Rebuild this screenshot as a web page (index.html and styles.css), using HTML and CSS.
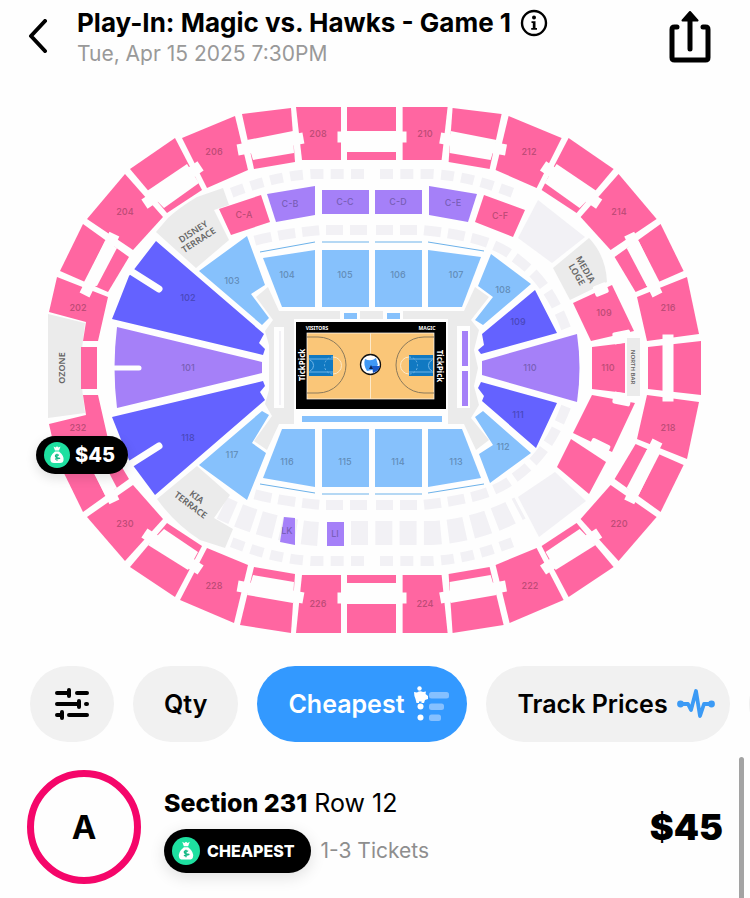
FILE: index.html
```html
<!DOCTYPE html>
<html lang="en">
<head>
  <meta charset="UTF-8">
  <meta name="viewport" content="width=device-width, initial-scale=1">
  <title>Play-In: Magic vs. Hawks - Game 1</title>
  <link rel="stylesheet" href="styles.css">
</head>
<body>
  <header class="header">
    <button class="icon-btn back" aria-label="Back">
      <svg width="20" height="34" viewBox="0 0 20 34"><path d="M17 2 L3 17 L17 32" fill="none" stroke="#000" stroke-width="4" stroke-linecap="round" stroke-linejoin="round"/></svg>
    </button>
    <div class="event">
      <div class="title-row">
        <h1>Play-In: Magic vs. Hawks - Game 1</h1>
        <button class="icon-btn" aria-label="Event info">
          <svg width="28" height="28" viewBox="0 0 28 28"><circle cx="14" cy="14" r="12" fill="none" stroke="#000" stroke-width="2.4"/><circle cx="14" cy="8.6" r="2" /><path d="M11.500 12.200h4v6.800h1.500v1.800h-5.800v-1.800h1.600v-5h-1.300z"/></svg>
        </button>
      </div>
      <p class="date">Tue, Apr 15 2025 7:30PM</p>
    </div>
    <button class="icon-btn share" aria-label="Share">
      <svg width="42" height="52" viewBox="0 0 42 52"><path d="M8 16H5.500Q3 16 3 18.500V46.500Q3 49 5.500 49H36.500Q39 49 39 46.500V18.500Q39 16 36.500 16H34" fill="none" stroke="#000" stroke-width="5" stroke-linecap="round"/><path d="M21 8V38" stroke="#000" stroke-width="5" stroke-linecap="round"/><path d="M21 1L28.500 9.500H13.500Z" stroke="#000" stroke-width="2" stroke-linejoin="round"/></svg>
    </button>
  </header>

  <main>
    <section class="map">
      <svg class="arena" viewBox="0 90 750 560" role="img" aria-label="Seating map">
        <defs>
          <g id="ring-side">
            <g class="pink">
              <path d="M60 271L83 224L129 257L108 292Z"/>
              <path d="M87 219L125 174L163 217L133 250Z"/>
              <path d="M130 169L175 138L202 190L167 213Z"/>
              <path d="M182 138L235 116L248 170L207 188Z"/>
              <path d="M242 114L291 108L295 162L254 169Z"/>
              <path d="M296 107H341V160H302Z"/>
              <path d="M60 465L83 512L129 479L108 444Z"/>
              <path d="M87 517L125 561L163 519L133 485Z"/>
              <path d="M130 567L175 597L202 546L167 523Z"/>
              <path d="M180 600L234 623L248 565L207 548Z"/>
              <path d="M240 625L291 633L295 574L254 567Z"/>
              <path d="M296 633H341V575H302Z"/>
            </g>
            <g class="gap">
              <path d="M105 241L83 284L97 286L117 248Z"/>
              <path d="M147 191L187 164L199 183L164 208Z"/>
              <path d="M247 140L293 131L294 153L253 160Z"/>
              <path d="M105 495L83 452L97 450L117 488Z"/>
              <path d="M148 545L188 570L198 552L164 529Z"/>
              <path d="M247 595L293 603L294 582L253 575Z"/>
            </g>
            <g class="cap">
              <path d="M112 239L88 289"/>
              <path d="M149 201L196 169"/>
              <path d="M243 149L298 139"/>
              <path d="M112 497L88 447"/>
              <path d="M149 536L196 567"/>
              <path d="M243 587L298 597"/>
            </g>
          </g>
          <g id="suites">
            <path d="M364 174H311C280 176 255 184 231 193" stroke-dasharray="13 7.300"/>
            <path d="M380 174H433C464 176 489 184 513 193" stroke-dasharray="13 7.300"/>
            <path d="M367 230H322C300 232 270 236 250 242" stroke-dasharray="17 7"/>
            <path d="M376 230H422C460 234 490 240 510 254S550 285 567 331" stroke-dasharray="17 7"/>
          </g>
        </defs>

        <!-- suites and clubs without tickets -->
        <g class="suite">
          <use href="#suites"/>
          <use href="#suites" transform="matrix(1 0 0 -1 0 735)"/>
          <path class="loge" d="M351 533H430C460 532 490 524 520 508" stroke-dasharray="17 7.300"/>
          <path class="loge" d="M318 534C290 532 255 524 222 508" stroke-dasharray="16 6"/>
        </g>
        <path class="pale" d="M538 200L585 237L552 263L518 238Z"/>
        <path class="pale edged" d="M555 472L586 501L539 537L518 497Z"/>
        <g class="grey">
          <path d="M156 232L168 218Q180 207 197 197L223 188L229 205L214 210L229 240L196 268Z"/>
          <path d="M197 466L230 495L214 518L233 529L225 548L200 540Q175 524 157 499Z"/>
          <path d="M589 238Q606 256 607 282L570 300L553 268Z"/>
          <path d="M48 314L85 323Q78 368 85 413L48 418Z"/>
          <path d="M256 297L268 287L279 311H464L475 287L489 297L471 320L479 330L474 350L478 368L474 386L479 405L471 418L489 440L476 450L464 424H279L267 450L254 441L272 416L265 404L269 390V345L265 331L273 320Z"/>
        </g>

        <!-- 200 level -->
        <use href="#ring-side"/>
        <use href="#ring-side" transform="matrix(-1 0 0 1 743.600 0)"/>
        <g class="pink">
          <path d="M347 107H396V131H347ZM347 152H396V160H347ZM347 575H396V583H347ZM347 604H396V633H347Z"/>
          <path d="M57 277L108 297L98 341H83L86 322L49 312Z"/>
          <path d="M57 459L108 439L98 395H83L86 415L49 424Z"/>
          <path d="M81 347H97V389H81Z"/>
          <path d="M687 277L637 297L647 341L699 334Z"/>
          <path d="M648 347L701 341V395L648 389Z"/>
          <path d="M687 459L637 439L647 395L699 402Z"/>
        </g>
        <g class="cap">
          <path d="M343 137H401M343 598H401"/>
          <path d="M89 286L87 290M89 450L87 446M655 290L653 286M655 446L653 450"/>
          <path d="M668 340V396"/>
        </g>

        <!-- east mezzanine -->
        <g class="pink">
          <path d="M573 303L612 285L634 331L591 341Z"/>
          <path d="M592 347L625 343V393L592 389Z"/>
          <path d="M592 395L635 403L612 452L573 433Z"/>
          <path d="M571 439L606 462L589 494L557 467Z"/>
        </g>
        <g class="gap">
          <rect x="594" y="284" width="14" height="11" rx="2" transform="rotate(-22 601 290)"/>
          <rect x="613" y="331" width="18" height="12" rx="2" transform="rotate(-12 622 337)"/>
          <rect x="613" y="393" width="18" height="12" rx="2" transform="rotate(12 622 399)"/>
          <rect x="589" y="441" width="20" height="13" rx="2" transform="rotate(26 599 448)"/>
        </g>
        <rect class="bar" x="627" y="338" width="13" height="58"/>

        <!-- club row -->
        <path class="pink" d="M219 209L261 195L270 222L231 235ZM484 195L525 210L513 237L475 222Z"/>
        <g class="purple">
          <path d="M267 194L315 186V215L276 222Z"/>
          <path d="M322 190H369V214H322ZM375 190H422V214H375Z"/>
          <path d="M429 186L477 194L468 222L429 215Z"/>
          <path d="M284 517L295 518V545L280 542Z"/>
          <path d="M327 522H344V546H327Z"/>
          <path d="M117 327L262 362V373L117 408Q112 368 117 327Z"/>
          <path d="M577 334Q582 368 577 402L482 375V361Z"/>
        </g>

        <!-- 100 level -->
        <g class="indigo">
          <path d="M156 241L264 334L259 343L265 349L263 355L112 319L118 304L129 276Z"/>
          <path d="M112 417L263 381L265 386L260 392L265 400L155 495L129 460L118 432Z"/>
          <path d="M535 290L557 333L481 354L478 350L484 345L482 334Z"/>
          <path d="M481 382L557 403L536 448L482 401L484 396L478 388Z"/>
        </g>
        <path class="aisle" d="M129 270L159 289M129 465L159 446"/>
        <path class="aisle thin" d="M112 368H139"/>
        <g class="sky">
          <path d="M247 236L265 285L251 294L269 318L262 325L199 271Z"/>
          <path d="M263 258L315 250V307H282Z"/>
          <path d="M322 250H369V307H322ZM375 250H422V307H375Z"/>
          <path d="M428 250L481 257L462 307H428Z"/>
          <path d="M491 254L531 284L483 325L475 320L493 297L478 286Z"/>
          <path d="M262 411L269 415L252 443L266 453L247 500L199 465Z"/>
          <path d="M282 429H315V487L263 478Z"/>
          <path d="M322 429H369V487H322ZM375 429H422V487H375Z"/>
          <path d="M428 429H462L481 478L428 487Z"/>
          <path d="M483 411L531 453L490 483L479 454L493 445L475 417Z"/>
        </g>
        <path class="rail" d="M260 252L315 242M322 242H369M375 242H422M428 242L484 251M260 484L315 493M322 494H369M375 494H422M428 493L484 484"/>

        <!-- courtside -->
        <g class="gap">
          <path d="M294 319H448V428H294ZM274 327H284V408H274ZM457 326H470V408H457ZM340 311H360V322H340ZM383 311H403V322H383Z"/>
        </g>
        <path class="pale" d="M279 331H281V405H279Z"/>
        <path class="sky" d="M302 416H442V422H302ZM344 313H357V319H344ZM387 313H400V319H387Z"/>
        <path class="purple" d="M462 331H468V366H462ZM462 371H468V406H462Z"/>

        <rect x="296" y="322" width="150" height="87"/>
        <rect x="307" y="333" width="127" height="66" fill="#fac678" stroke="#fff" stroke-width=".7"/>
        <g class="court-line">
          <path d="M307 337H318A28 28 0 0 1 318 393H307M434 337H424A28 28 0 0 0 424 393H434"/>
          <path class="white" d="M370.500 333V399M333 357A8.500 8.500 0 0 1 333 374M409 357A8.500 8.500 0 0 0 409 374"/>
        </g>
        <path d="M309 355H333V376H309ZM409 355H433V376H409Z" fill="#1179c2"/>
        <g class="court-line">
          <path class="key" d="M309 359H333M309 372H333M409 359H433M409 372H433"/>
          <path class="key" d="M310 360A6 6 0 0 1 310 371M432 360A6 6 0 0 0 432 371"/>
          <path class="key dash" d="M333 357A8.500 8.500 0 0 0 333 374M409 357A8.500 8.500 0 0 1 409 374"/>
        </g>
        <circle cx="370.500" cy="364.500" r="10" fill="#fff" stroke="#111" stroke-width="1.300"/>
        <path d="M365 359Q371 362 376 358L378 365L372 370L367 371Q363 365 365 359Z" fill="#3f98f5"/>
        <path d="M372 366L380 366Q379 371 373 373Z" fill="#1657c8"/>
        <path d="M369 369L371 365L373 369Z" fill="#12204c"/>

        <g class="num">
          <text x="78" y="311">202</text><text x="125" y="215">204</text><text x="214" y="155">206</text>
          <text x="318" y="137">208</text><text x="425" y="137">210</text><text x="529" y="155">212</text>
          <text x="619" y="215">214</text><text x="668" y="311">216</text><text x="668" y="431">218</text>
          <text x="619" y="527">220</text><text x="530" y="589">222</text><text x="425" y="607">224</text>
          <text x="318" y="607">226</text><text x="214" y="589">228</text><text x="125" y="527">230</text>
          <text x="78" y="431">232</text><text x="604" y="316">109</text><text x="608" y="371">110</text>
          <text x="244" y="218">C-A</text><text x="290" y="207">C-B</text><text x="345" y="205">C-C</text>
          <text x="398" y="205">C-D</text><text x="453" y="206">C-E</text><text x="500" y="219">C-F</text>
          <text x="287" y="534">LK</text><text x="335" y="537">LI</text>
          <text x="188" y="301">102</text><text x="188" y="371">101</text><text x="188" y="441">118</text>
          <text x="232" y="284">103</text><text x="287" y="278">104</text><text x="345" y="278">105</text>
          <text x="398" y="278">106</text><text x="456" y="278">107</text><text x="503" y="293">108</text>
          <text x="518" y="325">109</text><text x="530" y="371">110</text><text x="518" y="418">111</text>
          <text x="503" y="450">112</text><text x="456" y="465">113</text><text x="398" y="465">114</text>
          <text x="345" y="465">115</text><text x="287" y="465">116</text><text x="232" y="458">117</text>
        </g>
        <g class="place">
          <g transform="translate(196 236) rotate(-33)"><text y="-2">DISNEY</text><text y="8">TERRACE</text></g>
          <g transform="translate(193 502) rotate(37)"><text y="-3">KIA</text><text y="7">TERRACE</text></g>
          <g transform="translate(581 272) rotate(60)"><text y="-2">MEDIA</text><text y="8">LOGE</text></g>
          <text transform="translate(65 368) rotate(-90)">OZONE</text>
          <text class="tiny" transform="translate(631 367) rotate(90)">NORTH BAR</text>
        </g>
        <g class="court-text">
          <text class="brand" transform="translate(305 365) rotate(-90)">TickPick</text>
          <text class="brand" transform="translate(437 366) rotate(90)">TickPick</text>
          <text x="317" y="330">VISITORS</text>
          <text x="427" y="330">MAGIC</text>
        </g>
      </svg>
      <button class="pin">
        <svg class="bag" viewBox="0 0 26 26"><circle cx="13" cy="13" r="13" fill="#1ee0a0"/><path d="M9.500 4.500L11.500 5.500L13 4.300L14.500 5.500L16.500 4.500L15 8.500H11ZM11 9.500H15Q20.500 14 19.500 18.500Q19 21 16 21H10Q7 21 6.500 18.500Q5.500 14 11 9.500Z" fill="#fff"/><path d="M15 13.200Q11.300 12.200 11.400 14T14.700 16T11 17.200M13 11.800V18.800" fill="none" stroke="#12b884" stroke-width="1.200"/></svg>
        $45
      </button>
    </section>

    <nav class="filters">
      <button class="chip chip-icon" aria-label="Filters">
        <svg width="34" height="34" viewBox="0 0 34 34" fill="none" stroke="#000" stroke-width="4" stroke-linecap="round"><path d="M2 6H14M22 6H32M2 17H22M31 17H32M2 28H5M14 28H32"/><path d="M14 3V9M24 14V20M7 25V31"/></svg>
      </button>
      <button class="chip">Qty</button>
      <button class="chip active">Cheapest
        <svg width="36" height="36" viewBox="0 0 36 36"><g fill="#fff"><circle cx="6.500" cy="2.500" r="2.200"/><path d="M1 6L4 6.500Q7 4.500 10 6L13 5.500L12.500 8L15 10V13L12 14L11 17H8.500V15.500H6V17H3.500L2.500 13Q1 10 1 6Z"/><circle cx="7.500" cy="20.500" r="3"/><circle cx="7.500" cy="31.500" r="3"/></g><g fill="#86c0ff"><rect x="16" y="6" width="20" height="6.500" rx="2.500"/><rect x="16" y="17.500" width="15" height="6.500" rx="2.500"/><rect x="16" y="28.500" width="12" height="6.500" rx="2.500"/></g></svg>
      </button>
      <button class="chip track">Track Prices
        <svg width="38" height="32" viewBox="0 0 38 32"><path d="M4 16H11L14 22L19 3L23 28L27 16H34" fill="none" stroke="#3b9af5" stroke-width="3.800" stroke-linejoin="round"/><g fill="#3b9af5"><circle cx="3.500" cy="16" r="3.400"/><circle cx="34.500" cy="16" r="3.400"/></g></svg>
      </button>
      <button class="chip chip-icon" aria-label="More filters"></button>
    </nav>

    <section class="results">
      <a class="listing" href="#">
        <span class="grade">A</span>
        <span class="details">
          <span class="seat"><b>Section 231</b> Row 12</span>
          <span class="meta">
            <span class="badge"><svg class="bag" viewBox="0 0 26 26"><circle cx="13" cy="13" r="13" fill="#1ee0a0"/><path d="M9.500 4.500L11.500 5.500L13 4.300L14.500 5.500L16.500 4.500L15 8.500H11ZM11 9.500H15Q20.500 14 19.500 18.500Q19 21 16 21H10Q7 21 6.500 18.500Q5.500 14 11 9.500Z" fill="#fff"/><path d="M15 13.200Q11.300 12.200 11.400 14T14.700 16T11 17.200M13 11.800V18.800" fill="none" stroke="#12b884" stroke-width="1.200"/></svg>CHEAPEST</span>
            <span class="tickets">1-3 Tickets</span>
          </span>
        </span>
        <span class="price">$45</span>
      </a>
      <div class="scroll-thumb"></div>
    </section>
  </main>
</body>
</html>
```
FILE: styles.css
```css
* { box-sizing: border-box; }
body {
  margin: 0;
  min-height: 100vh;
  display: flex;
  flex-direction: column;
  background: #fefefe;
  color: #000;
  font-family: Inter, "Liberation Sans", sans-serif;
  overflow-x: hidden;
}
button {
  font: inherit;
  color: inherit;
  border: 0;
  padding: 0;
  cursor: pointer;
}
svg { display: block; flex: none; }
main {
  flex: 1;
  display: flex;
  flex-direction: column;
}

/* header */
.header {
  display: flex;
  align-items: flex-start;
  height: 90px;
  padding: 8px 39px 0 28px;
}
.icon-btn { background: none; }
.back { margin: 11px 29px 0 0; }
.share { margin-top: 3px; }
.event { flex: 1; }
.title-row {
  display: flex;
  align-items: center;
  gap: 9px;
}
h1 {
  margin: 0;
  font-size: 26px;
  line-height: 30px;
  font-weight: 700;
  white-space: nowrap;
}
.date {
  margin: 4px 0 0;
  font-size: 21px;
  line-height: 24px;
  color: #999;
}

/* seating map */
.map { position: relative; }
.arena { width: 100%; height: auto; }
.pink { fill: #ff66a1; }
.purple { fill: #a580f8; }
.indigo { fill: #6462ff; }
.sky { fill: #86c1fc; }
.grey, .bar { fill: #ebebeb; }
.pale { fill: #f2f1f5; }
.pale.edged {
  stroke: #fefefe;
  stroke-width: 6;
  paint-order: stroke;
}
.gap { fill: #fefefe; }
.cap {
  fill: none;
  stroke: #fefefe;
  stroke-width: 11;
  stroke-linecap: square;
}
.suite {
  fill: none;
  stroke: #f2f1f5;
  stroke-width: 10;
}
.suite .loge { stroke-width: 24; }
.aisle {
  stroke: #fefefe;
  stroke-width: 7;
  stroke-linecap: round;
}
.aisle.thin { stroke-width: 5; }
.rail {
  fill: none;
  stroke: #6db2ea;
  stroke-width: 1;
}
.court-line {
  fill: none;
  stroke: #8b7a5c;
  stroke-width: 1;
}
.court-line .white { stroke: #fde9c8; }
.court-line .key { stroke: #6fb4e6; }
.court-line .dash { stroke-dasharray: 2 2; }
.num {
  font-size: 9px;
  font-weight: 600;
  fill: #000;
  fill-opacity: .27;
  text-anchor: middle;
}
.place {
  font-family: "Noto Sans", sans-serif;
  font-size: 9px;
  font-weight: 600;
  fill: #666;
  text-anchor: middle;
}
.place .tiny { font-size: 6px; }
.court-text {
  font-family: "Noto Sans", sans-serif;
  font-size: 5px;
  font-weight: 700;
  fill: #fff;
  text-anchor: middle;
}
.court-text .brand { font-size: 8px; }

.pin, .badge {
  display: flex;
  align-items: center;
  background: #000;
  color: #fff;
  font-weight: 800;
}
.pin {
  position: absolute;
  left: 4.8%;
  top: 61.8%;
  height: 38px;
  padding: 0 13px 0 8px;
  gap: 5px;
  border-radius: 19px;
  font-size: 20px;
  box-shadow: 0 4px 12px rgba(0, 0, 0, .12);
}
.bag { width: 26px; height: 26px; }

/* filter chips */
.filters {
  display: flex;
  gap: 19px;
  padding: 16px 0 15px 30px;
  overflow: hidden;
}
.chip {
  flex: none;
  display: flex;
  align-items: center;
  gap: 9px;
  height: 76px;
  padding: 0 31px;
  border-radius: 38px;
  background: #f1f1f1;
  font-size: 25px;
  font-weight: 600;
}
.chip-icon {
  width: 84px;
  padding: 0 25px;
}
.chip.active {
  background: #3399ff;
  color: #fff;
  padding-right: 18px;
}
.chip.track { padding-right: 15px; }

/* listings */
.results {
  flex: 1;
  display: flex;
  align-items: stretch;
}
.listing {
  flex: 1;
  display: flex;
  align-items: center;
  align-self: flex-start;
  padding: 13px 16px 13px 27px;
  color: #000;
  text-decoration: none;
}
.grade {
  display: flex;
  align-items: center;
  justify-content: center;
  width: 114px;
  height: 114px;
  border: 7px solid #f5066a;
  border-radius: 50%;
  font-size: 33px;
  font-weight: 700;
}
.details {
  flex: 1;
  margin-left: 23px;
  padding-top: 6px;
}
.seat {
  display: block;
  font-size: 25px;
  line-height: 30px;
}
.seat b { font-weight: 800; }
.meta {
  display: flex;
  align-items: center;
  gap: 10px;
  margin-top: 11px;
}
.badge {
  height: 44px;
  padding: 0 16px 0 8px;
  gap: 7px;
  border-radius: 22px;
  font-size: 16px;
  box-shadow: 0 4px 16px rgba(0, 0, 0, .12);
}
.badge .bag { width: 28px; height: 28px; }
.tickets {
  font-size: 21px;
  color: #8e8e8e;
}
.price {
  font-size: 36px;
  font-weight: 900;
}
.scroll-thumb {
  width: 5px;
  margin-right: 6px;
  border-radius: 3px 3px 0 0;
  background: #a3a3a3;
}
```
